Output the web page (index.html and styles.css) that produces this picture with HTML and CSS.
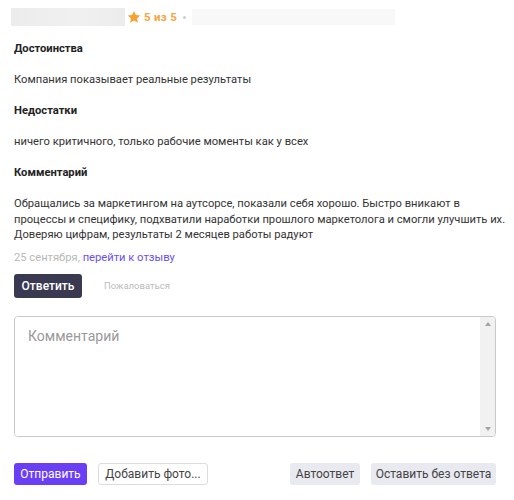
FILE: index.html
```html
<!DOCTYPE html>
<html lang="ru">
<head>
<meta charset="utf-8">
<link rel="stylesheet" href="styles.css">
</head>
<body>
<div class="review">
  <div class="top">
    <div class="blur blur-a"></div>
    <svg class="star" width="14" height="14" viewBox="0 0 24 24"><path d="M12 1.5l3.2 7 7.6.8-5.7 5.1 1.6 7.5L12 18l-6.7 3.9 1.6-7.5L1.2 9.3l7.6-.8z" fill="#f7a230"/></svg>
    <span class="rating">5 из 5</span>
    <span class="dot"></span>
    <div class="blur blur-b"></div>
  </div>
  <div class="h">Достоинства</div>
  <div class="t">Компания показывает реальные результаты</div>
  <div class="h">Недостатки</div>
  <div class="t">ничего критичного, только рабочие моменты как у всех</div>
  <div class="h">Комментарий</div>
  <div class="p">Обращались за маркетингом на аутсорсе, показали себя хорошо. Быстро вникают в процессы и специфику, подхватили наработки прошлого маркетолога и смогли улучшить их. Доверяю цифрам, результаты 2 месяцев работы радуют</div>
  <div class="meta"><span class="date">25 сентября,</span> <a class="link">перейти к отзыву</a></div>
  <div class="actions">
    <button class="btn-dark">Ответить</button>
    <span class="complain">Пожаловаться</span>
  </div>
  <div class="area">
    <textarea class="input" placeholder="Комментарий"></textarea>
    <div class="scroll">
      <span class="arrow up"></span>
      <span class="arrow down"></span>
    </div>
  </div>
  <div class="bottom">
    <div class="left">
      <button class="btn-primary">Отправить</button>
      <button class="btn-outline">Добавить фото...</button>
    </div>
    <div class="right">
      <button class="btn-grey auto">Автоответ</button>
      <button class="btn-grey leave">Оставить без ответа</button>
    </div>
  </div>
</div>
</body>
</html>
```

FILE: styles.css
```css
* { box-sizing: border-box; }
html, body { margin: 0; padding: 0; background: #fff; }
body { font-family: Roboto, "Noto Sans", sans-serif; color: #333; font-size: 11.2px; }
.review { width: 514px; padding: 8px 8px 0 14px; }
.top { display: flex; align-items: center; height: 18px; margin-left: -3px; }
.blur { height: 18px; }
.blur-a { width: 114px; background: linear-gradient(90deg, #ececec, #f0f0f0 60%, #ececec); }
.blur-b { width: 203px; height: 16px; background: #f8f8f8; margin-left: 6px; }
.star { margin-left: 2px; margin-right: 3px; }
.rating { color: #f7a540; font-weight: 700; font-size: 11.5px; letter-spacing: 0.3px; }
.dot { width: 3px; height: 3px; border-radius: 50%; background: #ccc; margin-left: 6px; }
.h { font-weight: 700; line-height: 16px; margin-top: 15px; color: #222; }
.t { line-height: 16px; margin-top: 15px; }
.p { line-height: 15.5px; margin-top: 15px; }
.meta { line-height: 16px; margin-top: 7px; }
.date { color: #b8b8b8; }
.link { color: #6a4ff5; }
.actions { display: flex; align-items: center; margin-top: 8px; }
.btn-dark { font-family: inherit; font-size: 12px; font-weight: 500; height: 24px; padding: 0; width: 68px; background: #393a52; color: #fff; border: none; border-radius: 3px; }
.complain { color: #bbb; font-size: 9.5px; margin-left: 22px; }
.area { display: flex; width: 482px; height: 121px; margin-top: 18px; border: 1px solid #c8c8c8; border-radius: 4px; overflow: hidden; }
.input { flex: 1; border: none; outline: none; padding: 11px 13px; font-family: inherit; font-size: 14px; color: #333; resize: none; }
.input::placeholder { color: #9a9a9a; }
.scroll { width: 15px; background: #f1f1f1; display: flex; flex-direction: column; justify-content: space-between; align-items: center; padding: 5px 0; }
.arrow { width: 0; height: 0; border-left: 3.5px solid transparent; border-right: 3.5px solid transparent; }
.arrow.up { border-bottom: 4px solid #a3a3a3; }
.arrow.down { border-top: 4px solid #a3a3a3; }
.bottom { display: flex; justify-content: space-between; width: 482px; margin-top: 26px; }
.left, .right { display: flex; gap: 11px; }
.bottom button { font-family: inherit; font-size: 12px; height: 22px; border-radius: 3px; padding: 0; white-space: nowrap; }
.btn-primary { background: #6a3ef5; color: #fff; border: none; width: 73px; }
.btn-outline { background: #fff; color: #444; border: 1px solid #ddd; width: 110px; }
.btn-grey { background: #e9e9f0; color: #444; border: none; }
.auto { width: 70px; }
.leave { width: 125px; }
```
